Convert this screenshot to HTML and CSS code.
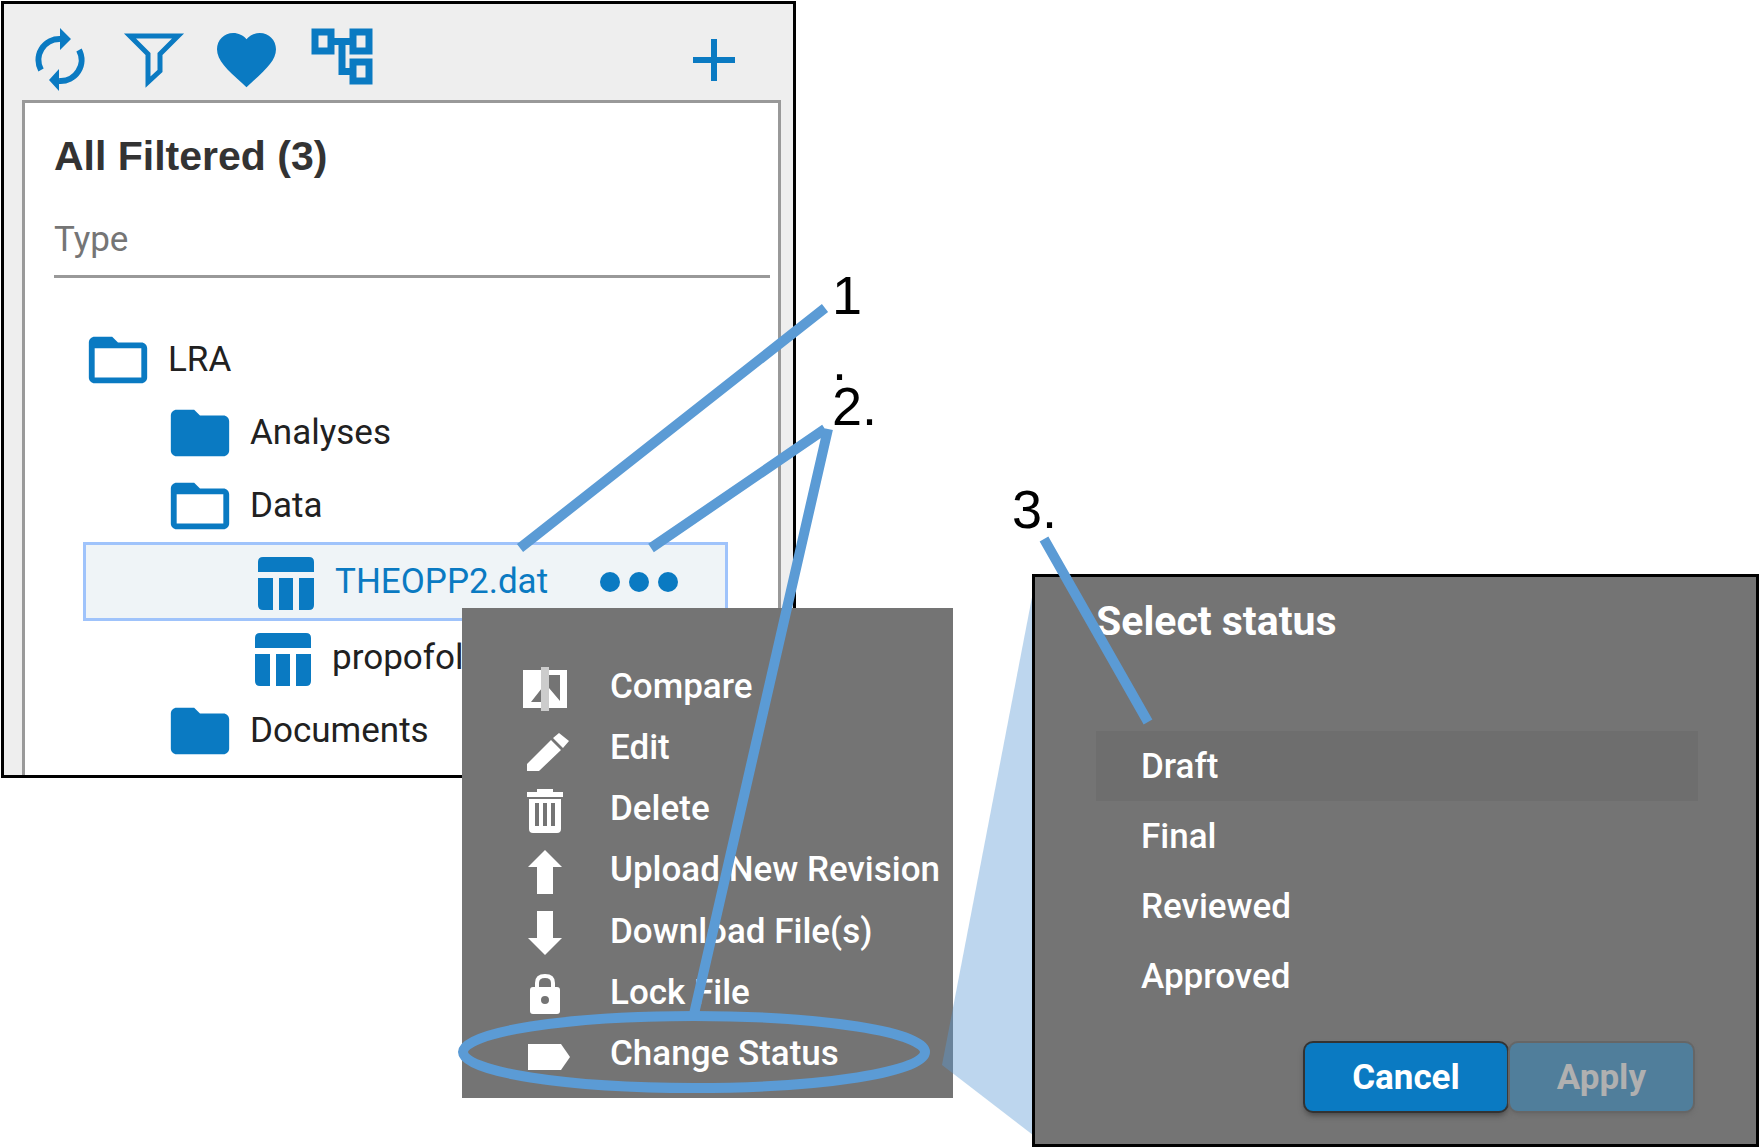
FILE: index.html
```html
<!DOCTYPE html>
<html lang="en">
<head>
<meta charset="utf-8">
<meta name="viewport" content="width=device-width, initial-scale=1">
<title>Changing a file status</title>
<link rel="stylesheet" href="styles.css">
</head>
<body>
<svg class="symbols" aria-hidden="true">
  <symbol id="folder" viewBox="0 0 24 24"><path d="M10 4H4c-1.100 0-2 .9-2 2v12c0 1.100.9 2 2 2h16c1.100 0 2-.9 2-2V8c0-1.100-.9-2-2-2h-8z"/></symbol>
  <symbol id="folder-open" viewBox="0 0 24 24"><path fill-rule="evenodd" d="M10 4H4c-1.100 0-2 .9-2 2v12c0 1.100.9 2 2 2h16c1.100 0 2-.9 2-2V8c0-1.100-.9-2-2-2h-8zM4 8h16v10H4z"/></symbol>
  <symbol id="table" viewBox="0 0 70 70"><path d="M8 16v-1q0-5 5-5h46q5 0 5 5v10H8zM8 31h15v32h-10q-5 0-5-5zM29 31h14v32H29zM49 31h15v27q0 5-5 5h-10z"/></symbol>
</svg>
<main class="canvas">
  <section class="browser" aria-label="File browser">
    <div class="toolbar">
      <button class="tool" type="button" aria-label="Refresh"><svg viewBox="0 0 64 64"><path d="M13 42A21 21 0 0 1 32 11M51 22A21 21 0 0 1 31 53" fill="none" stroke="currentColor" stroke-width="6"/><path d="M32 0L43 11 32 22zM31 41L21 52 31 63z"/></svg></button>
      <button class="tool" type="button" aria-label="Filter"><svg viewBox="0 0 64 64"><path d="M8 8H56L38 26V43L26 54V26z" fill="none" stroke="currentColor" stroke-width="5"/></svg></button>
      <button class="tool" type="button" aria-label="Favorites"><svg viewBox="1.660 1.300 21.700 21.700"><path d="M12 21.350l-1.450-1.320C5.400 15.360 2 12.280 2 8.500 2 5.420 4.420 3 7.500 3c1.740 0 3.410.81 4.500 2.090C13.090 3.810 14.760 3 16.500 3 19.580 3 22 5.420 22 8.500c0 3.780-3.400 6.860-8.550 11.540z"/></svg></button>
      <button class="tool" type="button" aria-label="Tree view"><svg viewBox="0 0 64 64"><path d="M5 4h16v19H5zM43 4h16v19H43zM43 34h16v19H43zM21 13.500h22M32 13.500v30h11" fill="none" stroke="currentColor" stroke-width="7"/></svg></button>
      <button class="tool tool-add" type="button" aria-label="Add"><svg viewBox="0 0 64 64"><path d="M11 32h42M32 11v42" fill="none" stroke="currentColor" stroke-width="6"/></svg></button>
    </div>
    <div class="listing">
      <h1 class="listing-title">All Filtered (3)</h1>
      <input class="type-filter" type="text" placeholder="Type" aria-label="Type">
      <ul class="tree">
        <li class="node"><svg><use href="#folder-open"/></svg><span>LRA</span></li>
        <li class="node level-1"><svg><use href="#folder"/></svg><span>Analyses</span></li>
        <li class="node level-1"><svg><use href="#folder-open"/></svg><span>Data</span></li>
        <li class="node level-2 selected"><svg><use href="#table"/></svg><span>THEOPP2.dat</span><button class="more" type="button" aria-label="More actions"><i></i><i></i><i></i></button></li>
        <li class="node level-2"><svg><use href="#table"/></svg><span>propofol</span></li>
        <li class="node level-1"><svg><use href="#folder"/></svg><span>Documents</span></li>
      </ul>
    </div>
  </section>

  <menu class="actions">
    <li><button type="button"><svg viewBox="0 0 48 48"><path fill-rule="evenodd" d="M2 5h44v38H2zM10 37h11V23zM28 10h11v26L28 23z"/><path class="dim" d="M20 2h8v44h-8z"/></svg>Compare</button></li>
    <li><button type="button"><svg viewBox="0 0 48 48"><path d="M6 38L30 14l10 10-22 21H6zM32 12l6-5 10 8-6 7z"/></svg>Edit</button></li>
    <li><button type="button"><svg viewBox="0 0 48 48"><path fill-rule="evenodd" d="M16 2h16v3h10v5H6V5h10zM8 12h32v30q0 4-4 4H12q-4 0-4-4zM14 16v23h4V16zM22 16v23h4V16zM30 16v23h4V16z"/></svg>Delete</button></li>
    <li><button type="button"><svg viewBox="0 0 48 48"><path d="M24 2l17 17h-9v27H16V19H7z"/></svg>Upload New Revision</button></li>
    <li><button type="button"><svg viewBox="0 0 48 48"><path d="M24 46l17-17h-9V2H16v27H7z"/></svg>Download File(s)</button></li>
    <li><button type="button"><svg viewBox="0 0 48 48"><path d="M16 18v-5q0-7 8-7t8 7v5" fill="none" stroke="currentColor" stroke-width="4"/><path fill-rule="evenodd" d="M12 17h24q3 0 3 3v21q0 3-3 3H12q-3 0-3-3V20q0-3 3-3zM24 26a4 4 0 100 8 4 4 0 000-8z"/></svg>Lock File</button></li>
    <li><button type="button"><svg viewBox="0 0 48 48"><path d="M7 13h33l9 13-9 13H7z"/></svg>Change Status</button></li>
  </menu>

  <svg class="beam" viewBox="0 0 92 544" aria-hidden="true"><path d="M91 0V543L0 473z"/></svg>

  <section class="status" role="dialog" aria-labelledby="status-title">
    <h2 class="status-title" id="status-title">Select status</h2>
    <ul class="options">
      <li><button class="current" type="button">Draft</button></li>
      <li><button type="button">Final</button></li>
      <li><button type="button">Reviewed</button></li>
      <li><button type="button">Approved</button></li>
    </ul>
    <div class="buttons">
      <button class="btn" type="button">Cancel</button>
      <button class="btn" type="button" disabled>Apply</button>
    </div>
  </section>

  <svg class="pointers" viewBox="0 0 1760 1148" aria-hidden="true">
    <path d="M825 308L520 548M651 548L825 429M828 429L694 1014M1044 539L1148 722"/>
    <ellipse cx="694" cy="1052" rx="231" ry="36"/>
  </svg>
  <p class="callout callout-1">1<br>.</p>
  <p class="callout callout-2">2.</p>
  <p class="callout callout-3">3.</p>
</main>
</body>
</html>
```
FILE: styles.css
```css
* { box-sizing: border-box; }

body {
  margin: 0;
  background: #fff;
  font-family: Roboto, "Liberation Sans", sans-serif;
  font-size: 35px;
  color: #212121;
}

ul, menu { list-style: none; margin: 0; padding: 0; }
h1, h2, p { margin: 0; }
button { border: 0; padding: 0; background: none; font: inherit; color: inherit; }
svg { display: block; fill: currentColor; flex: none; }

.symbols { position: absolute; width: 0; height: 0; }

/* Free canvas: three overlapping windows with callouts drawn across them */
.canvas { position: relative; min-height: 1148px; overflow: hidden; }

/* File browser */
.browser {
  position: absolute;
  left: 1px;
  top: 1px;
  width: 795px;
  border: 3px solid #000;
  padding: 0 12px 0 18px;
  background: #eee;
}

.toolbar {
  display: flex;
  align-items: center;
  gap: 30px;
  height: 96px;
  padding: 16px 35px 0 6px;
  color: #0a7ac2;
}
.tool, .tool svg { width: 64px; height: 64px; }
.tool-add { margin-left: auto; }

.listing {
  border: 3px solid #999;
  border-bottom: 0;
  padding: 33px 8px 8px 29px;
  background: #fff;
}
.listing-title {
  font: 700 41px/40px "Liberation Sans", Arial, sans-serif;
  color: #333;
}
.type-filter {
  display: block;
  width: 100%;
  height: 78px;
  margin: 24px 0 45px;
  border: 0;
  border-bottom: 3px solid #999;
  padding: 3px 0 0;
  background: none;
  font: inherit;
  outline: 0;
}
.type-filter::placeholder { color: #757575; opacity: 1; }

.tree { width: 645px; margin-left: 29px; }
.node {
  display: flex;
  align-items: center;
  gap: 15px;
  height: 73px;
}
.node svg { width: 70px; height: 70px; color: #0a7ac2; }
.level-1 { padding-left: 82px; }
.level-2 { padding-left: 164px; }
.selected {
  height: 79px;
  border: 3px solid #9fc3fb;
  background: #eff4f7;
  color: #0a7ac2;
}
.more { display: flex; gap: 9px; margin: 0 47px 0 auto; }
.more i { width: 20px; height: 20px; border-radius: 50%; background: #0a7ac2; }

/* Context menu */
.actions {
  position: absolute;
  left: 462px;
  top: 608px;
  width: 491px;
  height: 490px;
  display: grid;
  grid-auto-rows: 1fr;
  padding: 48px 0 14px 59px;
  background: #747474;
  color: #fff;
  font-weight: 500;
}
.actions li { display: flex; }
.actions button { display: flex; align-items: center; gap: 41px; white-space: nowrap; }
.actions svg { width: 48px; height: 48px; margin-top: 4px; overflow: visible; }
.dim { fill: #ccc; }

/* Status dialog */
.status {
  position: absolute;
  left: 1032px;
  top: 574px;
  width: 727px;
  border: 3px solid #000;
  padding: 20px 58px 33px 61px;
  background: #747474;
  color: #fff;
  font-weight: 500;
}
.status-title { font-size: 41px; line-height: 48px; font-weight: 700; }
.options { margin-top: 86px; }
.options button { width: 100%; height: 70px; padding: 0 45px; text-align: left; display: block; }
.options .current { background: #6e6e6e; }
.buttons { display: flex; justify-content: flex-end; gap: 3px; margin: 32px 5px 0; }
.btn {
  height: 68px;
  padding: 0 47px;
  border-radius: 8px;
  background: #0a7ac2;
  box-shadow: 0 0 0 2px #333, 0 4px 6px #444;
  font-weight: 700;
}
.btn:disabled {
  background: #507e9b;
  color: #b0b0b0;
  box-shadow: 0 0 0 2px #666, 0 3px 5px #666;
}

/* Callouts */
.beam { position: absolute; left: 942px; top: 592px; width: 92px; height: 544px; color: #5b9bd5; opacity: 0.4; }
.pointers {
  position: absolute;
  left: 0;
  top: 0;
  width: 1760px;
  height: 1148px;
  fill: none;
  stroke: #5b9bd5;
  stroke-width: 10;
  pointer-events: none;
}
.callout {
  position: absolute;
  font: 54px/66px "Liberation Sans", Arial, sans-serif;
  color: #000;
}
.callout-1 { left: 832px; top: 262px; }
.callout-2 { left: 832px; top: 373px; }
.callout-3 { left: 1012px; top: 476px; }
```
